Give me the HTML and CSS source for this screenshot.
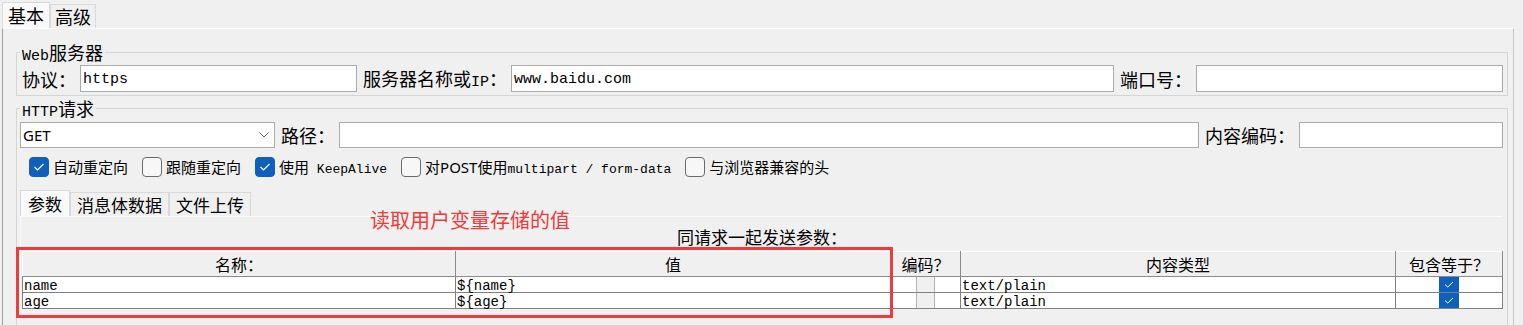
FILE: index.html
```html
<!DOCTYPE html>
<html lang="zh-CN">
<head>
    <meta charset="UTF-8">
    <meta name="viewport" content="width=device-width, initial-scale=1.0">
    <title>HTTP请求</title>
    <link rel="stylesheet" href="styles.css">
</head>

<body>
    <div class="tabs">
        <div class="tab active">基本</div>
        <div class="tab">高级</div>
    </div>

    <div class="panel">
        <fieldset class="group server">
            <legend><span class="en">Web</span>服务器</legend>
            <div class="row">
                <label class="lbl first">协议：</label>
                <input class="field proto" type="text" value="https">
                <label class="lbl">服务器名称或<span class="en">IP</span>：</label>
                <input class="field host" type="text" value="www.baidu.com">
                <label class="lbl">端口号：</label>
                <input class="field grow" type="text" value="">
            </div>
        </fieldset>

        <fieldset class="group http">
            <legend><span class="en">HTTP</span>请求</legend>
            <div class="row short">
                <div class="select">
                    <span>GET</span>
                    <svg width="10" height="6" viewBox="0 0 10 6"><polyline points="0.5,0.5 5,5 9.5,0.5" fill="none" stroke="#606060" stroke-width="1"/></svg>
                </div>
                <label class="lbl">路径：</label>
                <input class="field path" type="text" value="">
                <label class="lbl">内容编码：</label>
                <input class="field grow" type="text" value="">
            </div>

            <div class="checks">
                <label class="check"><span class="box on"><svg width="20" height="20" viewBox="0 0 20 20"><polyline points="5.5,10 8.5,13 14.5,7" fill="none" stroke="#fff" stroke-width="1.2"/></svg></span><span class="txt">自动重定向</span></label>
                <label class="check"><span class="box"></span><span class="txt">跟随重定向</span></label>
                <label class="check"><span class="box on"><svg width="20" height="20" viewBox="0 0 20 20"><polyline points="5.5,10 8.5,13 14.5,7" fill="none" stroke="#fff" stroke-width="1.2"/></svg></span><span class="txt">使用<span class="en">&nbsp;KeepAlive</span></span></label>
                <label class="check"><span class="box"></span><span class="txt">对<span class="sans">POST</span>使用<span class="en">multipart / form-data</span></span></label>
                <label class="check"><span class="box"></span><span class="txt">与浏览器兼容的头</span></label>
            </div>

            <div class="subtabs">
                <div class="tab active">参数</div>
                <div class="tab">消息体数据</div>
                <div class="tab">文件上传</div>
            </div>

            <div class="subpanel">
                <div class="caption">同请求一起发送参数：</div>
                <table class="args">
                    <colgroup>
                        <col style="width: 433px">
                        <col style="width: 435px">
                        <col style="width: 70px">
                        <col style="width: 435px">
                        <col style="width: 107px">
                    </colgroup>
                    <thead>
                        <tr>
                            <th>名称：</th>
                            <th>值</th>
                            <th>编码？</th>
                            <th>内容类型</th>
                            <th>包含等于？</th>
                        </tr>
                    </thead>
                    <tbody>
                        <tr>
                            <td><div class="cell">name</div></td>
                            <td><div class="cell">${name}</div></td>
                            <td><div class="ghost"></div></td>
                            <td><div class="cell">text/plain</div></td>
                            <td><div class="tick"><svg width="20" height="15" viewBox="0 0 20 15"><polyline points="6,7.5 8.8,10 14,5" fill="none" stroke="#fff" stroke-width="1"/></svg></div></td>
                        </tr>
                        <tr>
                            <td><div class="cell">age</div></td>
                            <td><div class="cell">${age}</div></td>
                            <td><div class="ghost"></div></td>
                            <td><div class="cell">text/plain</div></td>
                            <td><div class="tick"><svg width="20" height="15" viewBox="0 0 20 15"><polyline points="6,7.5 8.8,10 14,5" fill="none" stroke="#fff" stroke-width="1"/></svg></div></td>
                        </tr>
                    </tbody>
                </table>
            </div>
        </fieldset>
    </div>

    <!-- annotation drawn over the form -->
    <div class="note">读取用户变量存储的值</div>
    <div class="mark"></div>
</body>
</html>
```

FILE: styles.css
```css
html {
    overflow: hidden;
}

body {
    position: relative;
    margin: 0;
    background-color: #f0f0f0;
    color: #000;
    font-family: "Noto Sans CJK SC", sans-serif;
    font-size: 18px;
    overflow: hidden;
}

.en {
    font-family: "Liberation Mono", "Noto Sans CJK SC", monospace;
    font-size: 15px;
    line-height: 1;
}

.sans {
    font-family: "Noto Sans", "Noto Sans CJK SC", sans-serif;
    line-height: 1;
}

/* top tabs */
.tabs {
    display: flex;
    align-items: flex-end;
    height: 28px;
    padding: 2px 0 0 2px;
    box-sizing: border-box;
}

.tab {
    height: 24px;
    line-height: 23px;
    padding: 0 4px;
    border: 1px solid #d9d9d9;
    border-bottom: none;
    box-sizing: border-box;
    background-color: #f0f0f0;
    white-space: nowrap;
}

.tab.active {
    height: 26px;
    line-height: 25px;
    padding: 0 5px;
    background-color: #f9f9f9;
}

.panel {
    margin: 0 9px 0 2px;
    border-left: 1px solid #a0a0a0;
    border-right: 1px solid #c4c4c4;
    border-top: 1px solid #fcfcfc;
}

/* groups */
.group {
    margin: 13px 5px 0 13px;
    padding: 3px 4px 3px 3px;
    border: 1px solid #d5d5d5;
    min-width: 0;
}

.group.http {
    margin-top: 2px;
    padding-top: 4px;
    padding-bottom: 40px;
}

.group legend {
    height: 20px;
    padding: 0 2px;
    line-height: 20px;
}

.row {
    display: flex;
    align-items: center;
    height: 27px;
    line-height: 20px;
}

.row.short {
    height: 26px;
}

.lbl {
    margin: 0 4px 0 6px;
    white-space: nowrap;
}

.lbl.first {
    margin-left: 2px;
}

.field {
    flex-shrink: 0;
    height: 100%;
    box-sizing: border-box;
    border: 1px solid #ababab;
    background-color: #fff;
    padding: 2px 2px 0;
    font-family: "Liberation Mono", monospace;
    font-size: 15px;
    color: #000;
    outline: none;
}

.field.proto {
    width: 277px;
}

.field.host {
    width: 603px;
}

.field.path {
    width: 860px;
}

.field.grow {
    flex: 1;
    min-width: 0;
}

.select {
    display: flex;
    align-items: center;
    justify-content: space-between;
    flex-shrink: 0;
    width: 255px;
    height: 100%;
    box-sizing: border-box;
    border: 1px solid #ababab;
    background-color: #fff;
    padding: 0 5px 0 2px;
    font-family: "Noto Sans", sans-serif;
    font-size: 15px;
}

/* checkbox line */
.checks {
    display: flex;
    align-items: center;
    height: 20px;
    margin-top: 9px;
    padding-left: 9px;
    font-size: 15px;
    line-height: 20px;
}

.checks .en {
    font-size: 13px;
}

.check {
    display: flex;
    align-items: center;
    height: 20px;
    margin-right: 14px;
    white-space: nowrap;
}

.txt {
    display: block;
    height: 20px;
}

.box {
    width: 20px;
    height: 20px;
    box-sizing: border-box;
    margin-right: 4px;
    border: 1px solid #6b6b6b;
    border-radius: 4px;
    background-color: #f7f7f7;
}

.box.on {
    border-color: #0f5fbd;
    background-color: #0f5fbd;
}

.box svg {
    display: block;
    margin: -1px;
}

/* inner tabs */
.subtabs {
    display: flex;
    align-items: flex-end;
    height: 26px;
    margin-top: 13px;
    font-size: 17px;
}

.subtabs .tab {
    padding: 0 6px;
}

.subtabs .tab.active {
    padding: 0 7px;
}

.subpanel {
    margin-right: 1px;
    padding-left: 1px;
    border-top: 1px solid #fbfbfb;
    border-left: 1px solid #fbfbfb;
}

.caption {
    height: 20px;
    padding-top: 10px;
    font-size: 17px;
    line-height: 20px;
    text-align: center;
}

/* parameter table */
.args {
    width: 100%;
    margin-top: 4px;
    border-collapse: collapse;
    table-layout: fixed;
}

.args thead tr {
    height: 25px;
}

.args tbody tr {
    height: 16px;
}

.args th {
    padding: 0;
    border: 1px solid #8c8c8c;
    border-top-color: #fdfdfd;
    border-left-color: #fdfdfd;
    background-color: #f0f0f0;
    font-size: 16px;
    font-weight: normal;
    line-height: 20px;
}

.args td {
    padding: 0;
    border: 1px solid #808080;
    background-color: #fff;
}

.cell {
    height: 14px;
    padding: 1px 0 0 1px;
    white-space: nowrap;
    font-family: "Liberation Mono", monospace;
    font-size: 14px;
    line-height: 16px;
}

.ghost {
    width: 17px;
    height: 15px;
    margin: 0 auto;
    border-left: 1px solid #b4b4b4;
    border-right: 1px solid #b4b4b4;
    background-color: #f0f0f0;
}

.tick {
    width: 20px;
    height: 15px;
    margin: 0 auto;
    background-color: #0f5fbd;
}

.tick svg {
    display: block;
}

/* red annotation */
.note {
    position: absolute;
    left: 370px;
    top: 208px;
    color: #ef3b3b;
    font-size: 20px;
    line-height: 24px;
}

.mark {
    position: absolute;
    left: 16px;
    top: 247px;
    width: 877px;
    height: 71px;
    box-sizing: border-box;
    border: 3px solid #ef3b3b;
}
```
